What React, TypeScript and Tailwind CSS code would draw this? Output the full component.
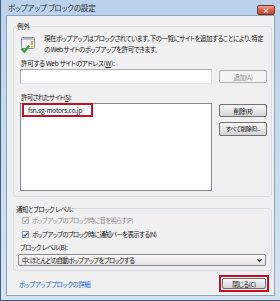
import { ChevronDown } from 'lucide-react';

const btn =
  'flex items-center justify-center rounded-[2px] border border-[#707070] bg-gradient-to-b from-[#f6f6f6] via-[#e6e6e6] to-[#d4d4d4] text-[#111] tracking-[-0.5px]';

const PopupIcon = () => (
  <svg width="16" height="18" viewBox="0 0 16 18">
    <rect x="1.5" y="1.5" width="13" height="11" rx="1" fill="#f3f3f3" stroke="#8b8f94" />
    <rect x="2" y="2" width="12" height="2" fill="#b8c2cc" />
    <rect x="11.2" y="5" width="1.6" height="4" fill="#e39a00" />
    <rect x="11.2" y="10" width="1.6" height="1.4" fill="#e39a00" />
    <path d="M1.5 12.5 L4.3 15.8 L9.2 9.6" fill="none" stroke="#2f9e2f" strokeWidth="2.2" />
  </svg>
);

const Check = ({ disabled }: { disabled?: boolean }) => (
  <span
    className={`flex h-[7px] w-[7px] shrink-0 items-center justify-center border ${
      disabled ? 'border-[#b8b8b8] bg-[#f4f4f4]' : 'border-[#8e8f8f] bg-white'
    }`}
  >
    <svg width="5" height="5" viewBox="0 0 5 5">
      <path
        d="M0.6 2.6 L2 4 L4.5 0.8"
        fill="none"
        stroke={disabled ? '#a8a8a8' : '#1f3f8f'}
        strokeWidth="1.1"
      />
    </svg>
  </span>
);

export default function App() {
  return (
    <div className="relative flex h-[301px] w-[280px] flex-col overflow-hidden border-b border-l border-[#41607e] bg-gradient-to-b from-[#bcd2ea] to-[#d6e3f1] font-['Noto_Sans_CJK_JP','Noto_Sans',sans-serif] text-[6.5px] leading-[10px] text-[#111] [font-feature-settings:'palt']">
      {/* title bar */}
      <div className="flex h-[15px] items-center pl-[7px] pt-[1px] text-[7.5px] tracking-[-0.2px] text-[#1b2533]">
        ポップアップ ブロックの設定
      </div>
      <div className="absolute right-[5px] top-[5px] flex h-[10px] w-[18px] items-center justify-center rounded-[2px] border border-[#7d3222] bg-gradient-to-b from-[#e9a591] via-[#d5624a] to-[#c24a2c] text-[7px] font-bold leading-none text-white">
        ×
      </div>

      {/* client area */}
      <div className="mx-[5px] mb-[4px] flex flex-1 flex-col border border-[#8ea3ba] bg-[#f0f0f0]">
        {/* exceptions group */}
        <div className="relative ml-[6px] mt-[10px] flex w-[259px] flex-col rounded-[3px] border border-[#d5dfe5] pb-[5px]">
          <span className="absolute -top-[6px] left-[2px] bg-[#f0f0f0] px-[1px]">例外</span>

          <div className="mt-[6px] flex">
            <div className="ml-[6px] mt-[3px] shrink-0">
              <PopupIcon />
            </div>
            <p className="ml-[8px] whitespace-nowrap leading-[11px] tracking-[-0.5px]">
              現在ポップアップはブロックされています。下の一覧にサイトを追加することにより、特定
              <br />
              の Web サイトのポップアップを許可できます。
            </p>
          </div>

          <div className="ml-[7px] mt-[3px] tracking-[-0.25px]">
            許可する Web サイトのアドレス(<span className="underline">W</span>):
          </div>
          <div className="mt-[1px] flex items-start">
            <div className="ml-[6px] h-[15px] w-[192px] border border-[#abadb3] border-b-[#e3e9ef] border-r-[#dbdfe6] bg-white" />
            <div className="ml-[7px] mt-[1px] flex h-[13px] w-[48px] items-center justify-center rounded-[2px] border border-[#adb2b5] bg-[#f4f4f4] tracking-[-0.5px] text-[#8a8a8a]">
              追加(A)
            </div>
          </div>

          <div className="ml-[7px] mt-[8px] tracking-[-0.7px]">
            許可されたサイト(<span className="underline">S</span>):
          </div>
          <div className="mt-[1px] flex items-start">
            <div className="relative ml-[6px] h-[88px] w-[192px] border border-[#828790] bg-white">
              <div className="absolute left-[1px] top-[-1px] flex h-[14px] w-[71px] items-center border-2 border-[#c40e2a] pl-[4px] tracking-[-0.2px]">
                fsn.sg-motors.co.jp
              </div>
            </div>
            <div className="ml-[7px] mt-[1px] flex flex-col gap-[5px]">
              <div className={`${btn} h-[13px] w-[48px]`}>削除(R)</div>
              <div className={`${btn} h-[14px] w-[48px] text-[6px] tracking-[-0.6px]`}>すべて削除(E)...</div>
            </div>
          </div>
        </div>

        {/* notification group */}
        <div className="relative ml-[6px] mt-[11px] flex w-[259px] flex-col rounded-[3px] border border-[#d5dfe5] pb-[4px] tracking-[-0.7px]">
          <span className="absolute -top-[5px] left-[1px] bg-[#f0f0f0] px-[1px] tracking-[-0.5px]">通知とブロック レベル:</span>
          <div className="ml-[8px] mt-[6px] flex items-center gap-[3px] text-[#8d8d8d]">
            <Check disabled />
            <span>ポップアップのブロック時に音を鳴らす(P)</span>
          </div>
          <div className="ml-[8px] mt-[4px] flex items-center gap-[3px]">
            <Check />
            <span>ポップアップのブロック時に通知バーを表示する(N)</span>
          </div>
          <div className="ml-[6px] mt-[3px] tracking-[-0.5px]">ブロック レベル(B):</div>
          <div className="ml-[4px] mt-[2px] flex h-[12px] w-[248px] items-center justify-between rounded-[2px] border border-[#8a8a8a] bg-gradient-to-b from-[#f8f8f8] to-[#e4e4e4] pl-[3px] pr-[2px]">
            <span>中: ほとんどの自動ポップアップをブロックする</span>
            <ChevronDown className="h-[7px] w-[7px] text-[#222]" strokeWidth={4} />
          </div>
        </div>

        {/* footer */}
        <div className="mt-[4px] flex h-[17px] items-center justify-between pl-[12px] pr-[5px]">
          <span className="tracking-[-0.5px] text-[#0b5dc8]">ポップアップ ブロックの詳細</span>
          <div className="flex h-[17px] w-[50px] items-center justify-center border-2 border-[#c40e2a] p-[1px]">
            <div className={`${btn} h-full w-full`}>閉じる(C)</div>
          </div>
        </div>
      </div>
    </div>
  );
}
